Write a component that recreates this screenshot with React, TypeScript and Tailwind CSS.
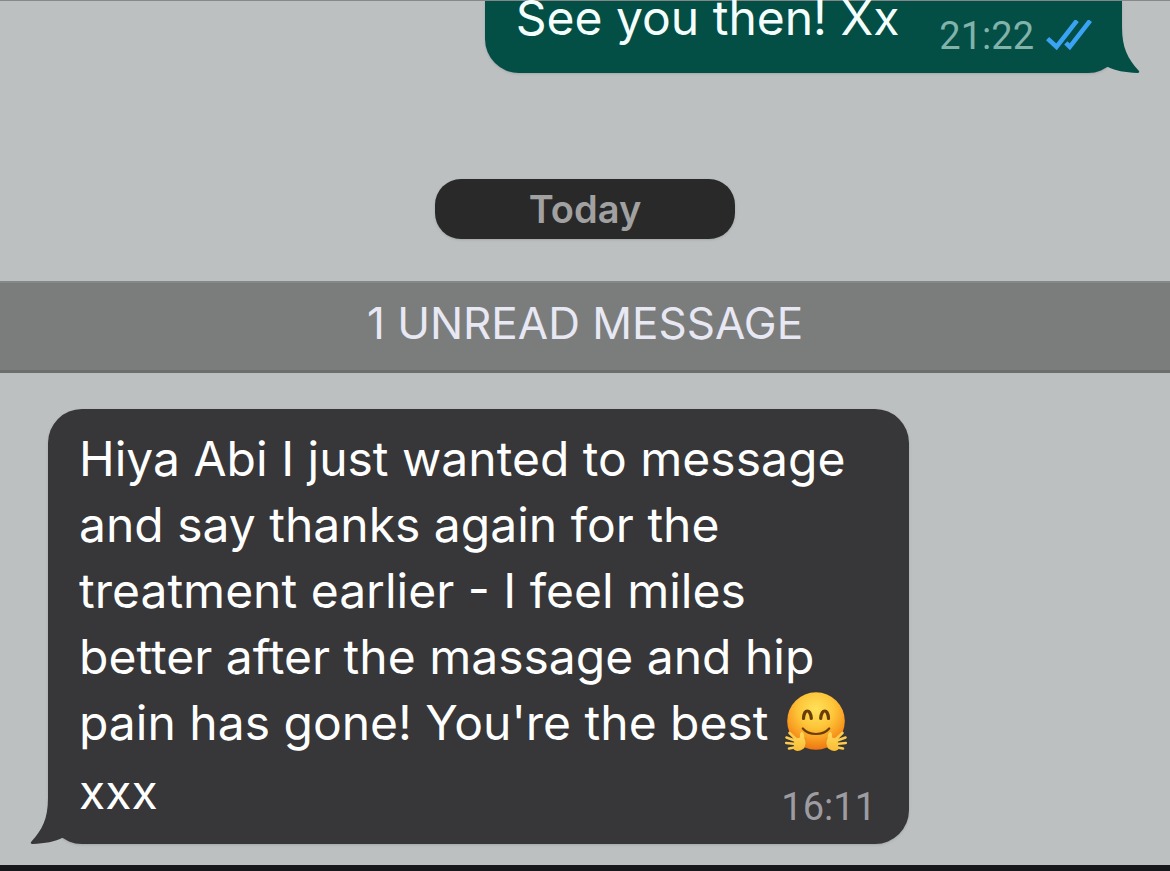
import type { ReactNode } from "react";

function BubbleTail({ side }: { side: "left" | "right" }) {
  return (
    <svg
      aria-hidden="true"
      viewBox="0 0 34 46"
      className={
        side === "right"
          ? "absolute -right-[18px] bottom-0 h-[46px] w-[34px] text-[#034e45]"
          : "absolute -left-[18px] bottom-0 h-[46px] w-[34px] -scale-x-100 text-[#373638]"
      }
    >
      <path
        d="M1 0H16C16 21 22 32 32.6 43.6C33.8 45 33.4 46 31.4 46C19 45.6 9 44 1 39.6Z"
        fill="currentColor"
      />
    </svg>
  );
}

function ReadTicks() {
  return (
    <svg
      role="img"
      aria-label="Read"
      viewBox="0 0 46 32"
      className="h-8 w-[46px]"
      fill="none"
      stroke="#3ba3f4"
      strokeWidth="4.6"
    >
      <path d="M1.6 18.6L10.5 26.8L31 0.6" />
      <path d="M19.8 22.8L23.8 26.8L44.2 0.6" />
    </svg>
  );
}

function HuggingFace() {
  return (
    <svg
      role="img"
      aria-label="Hugging face"
      viewBox="0 0 64 62"
      className="mb-1.5 ml-0.5 inline-block h-[62px] w-16 align-[-19px]"
    >
      <defs>
        <radialGradient id="face" cx="0.5" cy="0.3" r="0.68">
          <stop offset="0" stopColor="#ffe25a" />
          <stop offset="0.45" stopColor="#fec63a" />
          <stop offset="0.75" stopColor="#f99f22" />
          <stop offset="1" stopColor="#ee7a14" />
        </radialGradient>
        <linearGradient id="hand" x1="0" y1="0" x2="0" y2="1">
          <stop offset="0" stopColor="#ffd95c" />
          <stop offset="1" stopColor="#f9bd35" />
        </linearGradient>
      </defs>
      <circle cx="32" cy="30" r="28.8" fill="url(#face)" />
      <g fill="none" stroke="#6b3d06" strokeLinecap="round">
        <path d="M19.5 27.5C20 17.5 26.5 17.5 27.3 27.5" strokeWidth="3.2" />
        <path d="M36.7 27.5C37.5 17.5 44 17.5 44.5 27.5" strokeWidth="3.2" />
        <path d="M18.8 37.5C25 44.8 39 44.8 45.2 37.5" strokeWidth="2.2" />
      </g>
      <g id="left-hand">
        <path
          d="M12 48L5.5 42M12 50L2.5 46.5M12 53L2.2 52M13 56L5 57.5"
          fill="none"
          stroke="#fccb4b"
          strokeWidth="2.6"
          strokeLinecap="round"
        />
        <path
          d="M16 46.5C15.8 42.5 16.8 40.5 18.4 41.2C20 42 20.2 45 20.4 46.5C22.8 50 22.6 55 19 58C15 61 10.500 60 9.500 58L10.500 48Z"
          fill="url(#hand)"
        />
        <path d="M20.4 46.5C22.8 50 22.6 55 19 58" fill="none" stroke="#e58a18" strokeWidth="0.9" />
      </g>
      <use href="#left-hand" transform="translate(64 0) scale(-1 1)" />
    </svg>
  );
}

function Time({ children }: { children: ReactNode }) {
  return <time className="font-['Roboto','Liberation_Sans',sans-serif] text-[38px] leading-[44px]">{children}</time>;
}

export default function App() {
  return (
    <main className="flex min-h-screen flex-col border-t border-b-[6px] border-t-[#85898a] border-b-[#15171a] bg-[#bcc0c1] font-['Inter','Liberation_Sans',sans-serif]">
      <div className="flex justify-end px-12">
        <article className="relative flex items-start gap-10 rounded-b-[34px] bg-[#034e45] pr-[30px] pb-[15px] pl-[31px] shadow-sm">
          <BubbleTail side="right" />
          <p className="-mt-4 text-[48px] leading-[66px] text-[#f4fffd]">See you then! Xx</p>
          <div className="relative flex items-center gap-3 pt-[13px] text-[#82b3ab]">
            <Time>21:22</Time>
            <ReadTicks />
          </div>
        </article>
      </div>

      <h2 className="mt-[106px] w-[300px] self-center rounded-[26px] bg-[#292929] text-center text-[38px] leading-[60px] font-semibold text-[#a1a1a1] shadow-sm">
        Today
      </h2>

      <p className="mt-[42px] border-t-2 border-b-[3px] border-t-[#858888] border-b-[#6b6e6d] bg-[#7b7d7c] pt-3 pb-[19px] text-center text-[44px] leading-[56px] text-[#e8e8f4]">
        1 UNREAD MESSAGE
      </p>

      <div className="flex px-12 pt-9">
        <article className="relative w-[861px] max-w-full rounded-[34px] bg-[#373638] px-[31px] pt-[17px] pb-[19px] shadow-sm">
          <BubbleTail side="left" />
          <p className="relative text-[48px] leading-[66px] text-white">
            Hiya Abi I just wanted to message and say thanks again for the treatment earlier - I feel miles better
            after the massage and hip pain has gone! You're the best <HuggingFace /> xxx
          </p>
          <div className="absolute right-[33px] bottom-[15px] text-[#9d9ca1]">
            <Time>16:11</Time>
          </div>
        </article>
      </div>
    </main>
  );
}
